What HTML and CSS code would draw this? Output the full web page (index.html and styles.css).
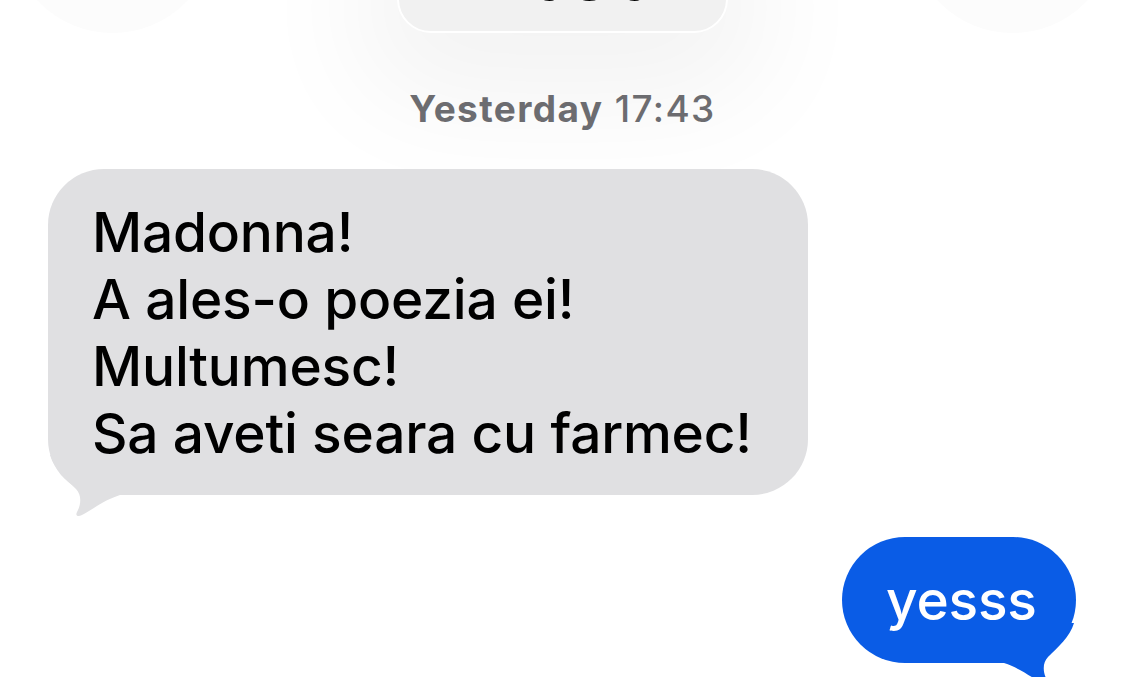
FILE: index.html
```html
<!doctype html>
<html lang="en">
	<head>
		<meta charset="UTF-8" />
		<meta name="viewport" content="width=device-width, initial-scale=1.0" />
		<title>Messages</title>
		<link rel="stylesheet" href="styles.css">
	</head>
	<body>
		<div class="header">
			<div class="ghost"></div>
			<div class="contact-pill">
				<span class="contact-name">Mihaela</span>
				<span class="contact-chevron">›</span>
			</div>
			<div class="ghost"></div>
		</div>

		<p class="timestamp"><b>Yesterday</b> 17:43</p>

		<div class="thread">
			<div class="bubble received">
				Madonna!<br>
				A ales-o poezia ei!<br>
				Multumesc!<br>
				Sa aveti seara cu farmec!
				<svg class="tail" viewBox="0 0 80 70" aria-hidden="true">
					<path d="M2 0 C6 14 18 24 28 34 C34 40 33 50 29 57 C27 61 30 62 34 60 C44 55 54 46 72 40 L72 0 Z" />
				</svg>
			</div>

			<div class="bubble sent">
				yesss
				<svg class="tail" viewBox="0 0 80 70" aria-hidden="true">
					<path d="M2 0 C6 14 18 24 28 34 C34 40 33 50 29 57 C27 61 30 62 34 60 C44 55 54 46 72 40 L72 0 Z" />
				</svg>
			</div>
		</div>
	</body>
</html>
```

FILE: styles.css
```css
body {
	margin: 0;
	width: 1125px;
	height: 677px;
	overflow: hidden;
	background: #fff;
	font-family: Inter, "Noto Sans", sans-serif;
	color: #000;
}
.header {
	display: flex;
	justify-content: space-between;
	align-items: flex-end;
	height: 33px;
	padding: 0 10px;
}
.ghost {
	flex: none;
	width: 205px;
	height: 205px;
	border-radius: 50%;
	background: #fcfcfc;
}
.contact-pill {
	flex: none;
	display: flex;
	justify-content: center;
	align-items: flex-end;
	gap: 14px;
	box-sizing: border-box;
	width: 331px;
	height: 110px;
	padding-bottom: 22px;
	border: 2px solid #fff;
	border-radius: 34px;
	background: #f1f1f1;
	box-shadow: 0 30px 120px 36px rgba(0, 0, 0, 0.05);
	line-height: 60px;
}
.contact-name {
	font-size: 58px;
	font-weight: 800;
}
.contact-chevron {
	font-size: 58px;
	font-weight: 700;
	color: #8e8e93;
}
.timestamp {
	margin: 55px 0 0;
	text-align: center;
	font-size: 37px;
	line-height: 42px;
	letter-spacing: 1.4px;
	font-weight: 500;
	color: #6c6c70;
}
.timestamp b {
	font-weight: 700;
}
.thread {
	display: flex;
	flex-direction: column;
	gap: 42px;
	padding: 39px 49px 0 48px;
}
.bubble {
	position: relative;
	box-sizing: border-box;
	padding: 30px 44px 28px;
	border-radius: 56px;
	font-size: 55px;
	font-weight: 500;
	letter-spacing: -0.2px;
	line-height: 67px;
	white-space: nowrap;
}
.bubble .tail {
	position: absolute;
	bottom: -30px;
	width: 80px;
	height: 70px;
}
.received {
	align-self: flex-start;
	width: 760px;
	background: #e0e0e2;
}
.received .tail {
	left: 0;
	fill: #e0e0e2;
}
.sent {
	align-self: flex-end;
	width: 234px;
	height: 126px;
	border-radius: 63px;
	background: #0a5ce6;
	color: #fff;
}
.sent .tail {
	right: 0;
	fill: #0a5ce6;
	transform: scaleX(-1);
}
```
